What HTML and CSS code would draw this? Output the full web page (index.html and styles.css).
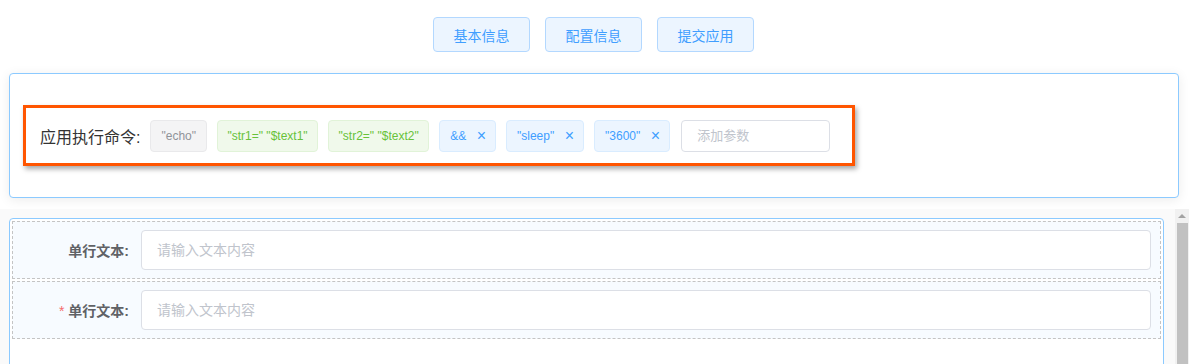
FILE: index.html
```html
<!DOCTYPE html>
<html lang="zh-CN">
<head>
    <meta charset="UTF-8">
    <title>应用配置</title>
    <link rel="stylesheet" href="styles.css">
</head>
<body>

<!-- Step buttons -->
<div class="steps">
    <button class="step-btn">基本信息</button>
    <button class="step-btn">配置信息</button>
    <button class="step-btn">提交应用</button>
</div>

<!-- Command panel -->
<div class="panel cmd-panel">
    <div class="cmd-box">
        <span class="cmd-label">应用执行命令:</span>
        <span class="tag tag-info">"echo"</span>
        <span class="tag tag-success">"str1=" "$text1"</span>
        <span class="tag tag-success">"str2=" "$text2"</span>
        <span class="tag">&amp;&amp;<i class="tag-close">×</i></span>
        <span class="tag">"sleep"<i class="tag-close">×</i></span>
        <span class="tag">"3600"<i class="tag-close">×</i></span>
        <input class="tag-input" type="text" placeholder="添加参数">
    </div>
</div>

<!-- Form area with its own scrollbar -->
<div class="scroll-area">
    <div class="scroll-content">
        <div class="panel form-panel">
            <div class="form-row">
                <label class="form-label">单行文本:</label>
                <input class="form-input" type="text" placeholder="请输入文本内容">
            </div>
            <div class="form-row">
                <label class="form-label"><span class="required">*</span> 单行文本:</label>
                <input class="form-input" type="text" placeholder="请输入文本内容">
            </div>
        </div>
    </div>
    <div class="scrollbar">
        <div class="scroll-arrow"></div>
        <div class="scroll-thumb"></div>
    </div>
</div>

</body>
</html>
```

FILE: styles.css
```css
html, body {
    margin: 0;
    height: 364px;
    overflow: hidden;
}
body {
    font-family: "Helvetica Neue", "Liberation Sans", "Noto Sans CJK SC", sans-serif;
    background-color: #fff;
    color: #333;
}
.steps {
    display: flex;
    justify-content: center;
    gap: 15px;
    padding-top: 17px;
    padding-right: 2px;
}
.step-btn {
    width: 97px;
    height: 35px;
    background-color: #ecf5ff;
    border: 1px solid #b3d8ff;
    border-radius: 4px;
    color: #409eff;
    font-family: inherit;
    font-size: 14px;
    padding: 0;
}
.panel {
    border: 1px solid #8ccaff;
    border-radius: 4px;
    background-color: #fff;
    box-shadow: 0 2px 12px rgba(0, 0, 0, 0.08);
}
.cmd-panel {
    margin: 21px 10px 0 9px;
    padding: 31px 0 0 13px;
    box-sizing: border-box;
    height: 125px;
}
.cmd-box {
    display: flex;
    align-items: center;
    width: 832px;
    height: 61px;
    box-sizing: border-box;
    border: 3px solid #ff5500;
    padding-left: 14px;
    box-shadow: 2px 3px 5px rgba(0, 0, 0, 0.35);
}
.cmd-label {
    font-size: 16px;
    color: #333;
    margin-right: 10px;
    padding-top: 1px;
}
.tag {
    display: inline-flex;
    align-items: center;
    height: 32px;
    box-sizing: border-box;
    padding: 0 10px;
    margin-right: 10px;
    font-size: 12px;
    border-radius: 4px;
    background-color: #ecf5ff;
    border: 1px solid #d9ecff;
    color: #409eff;
    white-space: nowrap;
}
.tag-info {
    background-color: #f4f4f5;
    border-color: #e9e9eb;
    color: #909399;
}
.tag-success {
    padding: 0 9.5px;
    background-color: #f0f9eb;
    border-color: #e1f3d8;
    color: #67c23a;
}
.tag-close {
    font-style: normal;
    font-size: 16px;
    font-weight: 300;
    margin-left: 10.5px;
    margin-right: -1px;
    line-height: 1;
}
.tag-input {
    width: 149px;
    height: 32px;
    box-sizing: border-box;
    border: 1px solid #dcdfe6;
    border-radius: 4px;
    padding: 0 15px;
    margin-left: 1px;
    font-family: inherit;
    font-size: 13px;
    outline: none;
}
.tag-input::placeholder, .form-input::placeholder {
    color: #c0c4cc;
}
.scroll-area {
    display: flex;
    margin-top: 11px;
    height: 155px;
    background-color: #fafafa;
}
.scroll-content {
    flex: 1;
    padding: 9px 11px 0 9px;
}
.form-panel {
    height: 200px;
    padding: 2px;
    border-radius: 4px 4px 0 0;
    box-shadow: none;
}
.form-row {
    display: flex;
    align-items: center;
    height: 58px;
    box-sizing: border-box;
    border: 1px dashed #c4c4c4;
    background-color: #f7fbff;
    margin-bottom: 2px;
}
.form-label {
    width: 116px;
    padding-right: 12px;
    text-align: right;
    font-size: 14px;
    font-weight: bold;
    color: #606266;
}
.required {
    color: #f56c6c;
    font-weight: normal;
}
.form-input {
    width: 1010px;
    height: 40px;
    box-sizing: border-box;
    border: 1px solid #dcdfe6;
    border-radius: 4px;
    padding: 0 15px;
    font-family: inherit;
    font-size: 14px;
    background-color: #fff;
    outline: none;
}
.scrollbar {
    width: 14px;
    background-color: #f1f1f1;
    display: flex;
    flex-direction: column;
    align-items: center;
}
.scroll-arrow {
    width: 0;
    height: 0;
    margin: 5px 0 5px;
    border-left: 4px solid transparent;
    border-right: 4px solid transparent;
    border-bottom: 4px solid #a3a3a3;
}
.scroll-thumb {
    width: 11px;
    flex: 1;
    background-color: #c1c1c1;
}
```
